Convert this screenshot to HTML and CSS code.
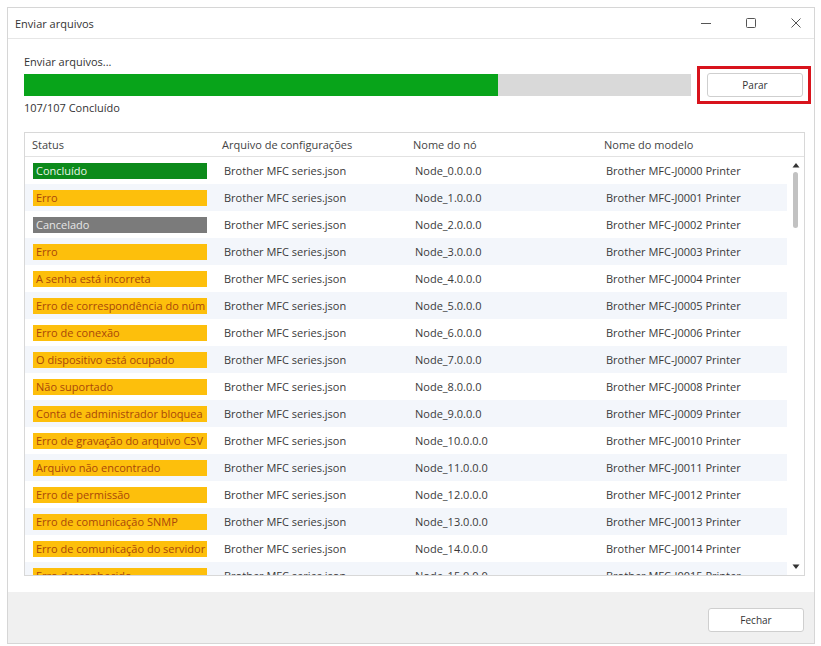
FILE: index.html
```html
<!doctype html>
<html>
<head>
<meta charset="UTF-8"/>
<link rel="stylesheet" href="styles.css">
<title>Enviar arquivos</title>
</head>
<body>
<div class="window">
  <div class="titlebar">
    <span class="title">Enviar arquivos</span>
    <div class="controls">
      <svg class="ctl" width="12" height="12" viewBox="0 0 12 12"><path d="M1 6.5h10" stroke="#555" stroke-width="1"/></svg>
      <svg class="ctl" width="12" height="12" viewBox="0 0 12 12"><rect x="1.5" y="1.5" width="9" height="9" rx="1" fill="none" stroke="#555" stroke-width="1"/></svg>
      <svg class="ctl" width="12" height="12" viewBox="0 0 12 12"><path d="M1.5 1.5l9 9M10.5 1.5l-9 9" stroke="#555" stroke-width="1"/></svg>
    </div>
  </div>

  <div class="content">
    <div class="label">Enviar arquivos...</div>
    <div class="progress-row">
      <div class="progress"><div class="progress-fill" style="width:71%"></div></div>
      <button class="btn btn-stop">Parar</button>
    </div>
    <div class="label count">107/107 Concluído</div>

    <div class="grid">
      <div class="grid-head">
        <div class="hcell first">Status</div>
        <div class="hcell">Arquivo de configurações</div>
        <div class="hcell">Nome do nó</div>
        <div class="hcell">Nome do modelo</div>
      </div>
      <div class="grid-body">
        <div class="rows">
          <div class="row"><div class="cell first"><span class="badge ok">Concluído</span></div><div class="cell">Brother MFC series.json</div><div class="cell">Node_0.0.0.0</div><div class="cell">Brother MFC-J0000 Printer</div></div>
          <div class="row alt"><div class="cell first"><span class="badge warn">Erro</span></div><div class="cell">Brother MFC series.json</div><div class="cell">Node_1.0.0.0</div><div class="cell">Brother MFC-J0001 Printer</div></div>
          <div class="row"><div class="cell first"><span class="badge off">Cancelado</span></div><div class="cell">Brother MFC series.json</div><div class="cell">Node_2.0.0.0</div><div class="cell">Brother MFC-J0002 Printer</div></div>
          <div class="row alt"><div class="cell first"><span class="badge warn">Erro</span></div><div class="cell">Brother MFC series.json</div><div class="cell">Node_3.0.0.0</div><div class="cell">Brother MFC-J0003 Printer</div></div>
          <div class="row"><div class="cell first"><span class="badge warn">A senha está incorreta</span></div><div class="cell">Brother MFC series.json</div><div class="cell">Node_4.0.0.0</div><div class="cell">Brother MFC-J0004 Printer</div></div>
          <div class="row alt"><div class="cell first"><span class="badge warn">Erro de correspondência do núm</span></div><div class="cell">Brother MFC series.json</div><div class="cell">Node_5.0.0.0</div><div class="cell">Brother MFC-J0005 Printer</div></div>
          <div class="row"><div class="cell first"><span class="badge warn">Erro de conexão</span></div><div class="cell">Brother MFC series.json</div><div class="cell">Node_6.0.0.0</div><div class="cell">Brother MFC-J0006 Printer</div></div>
          <div class="row alt"><div class="cell first"><span class="badge warn">O dispositivo está ocupado</span></div><div class="cell">Brother MFC series.json</div><div class="cell">Node_7.0.0.0</div><div class="cell">Brother MFC-J0007 Printer</div></div>
          <div class="row"><div class="cell first"><span class="badge warn">Não suportado</span></div><div class="cell">Brother MFC series.json</div><div class="cell">Node_8.0.0.0</div><div class="cell">Brother MFC-J0008 Printer</div></div>
          <div class="row alt"><div class="cell first"><span class="badge warn">Conta de administrador bloquea</span></div><div class="cell">Brother MFC series.json</div><div class="cell">Node_9.0.0.0</div><div class="cell">Brother MFC-J0009 Printer</div></div>
          <div class="row"><div class="cell first"><span class="badge warn">Erro de gravação do arquivo CSV</span></div><div class="cell">Brother MFC series.json</div><div class="cell">Node_10.0.0.0</div><div class="cell">Brother MFC-J0010 Printer</div></div>
          <div class="row alt"><div class="cell first"><span class="badge warn">Arquivo não encontrado</span></div><div class="cell">Brother MFC series.json</div><div class="cell">Node_11.0.0.0</div><div class="cell">Brother MFC-J0011 Printer</div></div>
          <div class="row"><div class="cell first"><span class="badge warn">Erro de permissão</span></div><div class="cell">Brother MFC series.json</div><div class="cell">Node_12.0.0.0</div><div class="cell">Brother MFC-J0012 Printer</div></div>
          <div class="row alt"><div class="cell first"><span class="badge warn">Erro de comunicação SNMP</span></div><div class="cell">Brother MFC series.json</div><div class="cell">Node_13.0.0.0</div><div class="cell">Brother MFC-J0013 Printer</div></div>
          <div class="row"><div class="cell first"><span class="badge warn">Erro de comunicação do servidor</span></div><div class="cell">Brother MFC series.json</div><div class="cell">Node_14.0.0.0</div><div class="cell">Brother MFC-J0014 Printer</div></div>
          <div class="row alt"><div class="cell first"><span class="badge warn">Erro desconhecido</span></div><div class="cell">Brother MFC series.json</div><div class="cell">Node_15.0.0.0</div><div class="cell">Brother MFC-J0015 Printer</div></div>
        </div>
        <div class="scrollbar">
          <svg width="8" height="6" viewBox="0 0 8 6"><path d="M4 1L7.5 5.5H0.5z" fill="#333"/></svg>
          <div class="thumb"></div>
          <div class="track"></div>
          <svg width="8" height="6" viewBox="0 0 8 6"><path d="M4 5L7.5 0.5H0.5z" fill="#333"/></svg>
        </div>
      </div>
    </div>
  </div>

  <div class="footer">
    <button class="btn">Fechar</button>
  </div>
</div>
</body>
</html>
```

FILE: styles.css
```css
body {
  margin: 0;
  background: #fff;
  font-family: "Open Sans", "Noto Sans", sans-serif;
  font-size: 11px;
  color: #333;
}
.window {
  margin: 7px 0 0 7px;
  width: 808px;
  height: 637px;
  box-sizing: border-box;
  border: 1px solid #d6d6d6;
  display: flex;
  flex-direction: column;
}
.titlebar {
  height: 30px;
  flex: none;
  border-bottom: 1px solid #e6e6e6;
  display: flex;
  align-items: center;
  justify-content: space-between;
  padding-left: 7px;
}
.title {
  color: #333;
}
.controls {
  display: flex;
  gap: 33px;
  padding-right: 12px;
}
.content {
  flex: 1;
  padding: 16px 9px 16px 16px;
  display: flex;
  flex-direction: column;
}
.label {
  line-height: 14px;
  height: 14px;
}
.progress-row {
  margin-top: 4px;
  height: 24px;
  display: flex;
  align-items: center;
  gap: 16px;
  padding-right: 2px;
}
.progress {
  flex: 1;
  height: 22px;
  background: #d9d9d9;
}
.progress-fill {
  height: 100%;
  background: #08a41a;
}
.btn {
  font-family: inherit;
  font-size: 10px;
  color: #333;
  width: 96px;
  height: 24px;
  background: #fff;
  border: 1px solid #cfcfcf;
  border-radius: 3px;
  padding: 0;
}
.btn-stop {
  position: relative;
}
.btn-stop::after {
  content: "";
  position: absolute;
  top: -8px;
  bottom: -8px;
  left: -11px;
  right: -9px;
  border: 3px solid #d8131c;
}
.count {
  margin-top: 4px;
}
.grid {
  margin-top: 17px;
  height: 444px;
  box-sizing: border-box;
  border: 1px solid #d8d8d8;
  display: flex;
  flex-direction: column;
}
.grid-head {
  height: 23px;
  flex: none;
  border-bottom: 1px solid #e2e2e2;
  display: grid;
  grid-template-columns: 189px 191px 191px 1fr;
  align-items: center;
  color: #444;
}
.hcell {
  padding-left: 8px;
}
.hcell.first {
  padding-left: 7px;
}
.grid-body {
  flex: 1;
  display: flex;
  overflow: hidden;
}
.rows {
  flex: 1;
  overflow: hidden;
}
.row {
  height: 27px;
  display: grid;
  grid-template-columns: 189px 191px 191px 1fr;
  align-items: center;
}
.row.alt {
  background: #f3f6fb;
}
.cell {
  padding-left: 10px;
  white-space: nowrap;
  color: #3a3a3a;
}
.cell.first {
  padding-left: 8px;
}
.badge {
  display: block;
  width: 174px;
  height: 16px;
  line-height: 16px;
  box-sizing: border-box;
  padding-left: 3px;
  overflow: hidden;
  white-space: nowrap;
  font-size: 11px;
}
.badge.ok {
  background: #0c8a1b;
  color: #eaf6ea;
}
.badge.warn {
  background: #fdbf0c;
  color: #a9470a;
}
.badge.off {
  background: #7b7b7b;
  color: #e6e6e6;
}
.scrollbar {
  width: 17px;
  flex: none;
  display: flex;
  flex-direction: column;
  align-items: center;
  padding: 5px 0 5px;
}
.thumb {
  margin-top: 4px;
  width: 5px;
  height: 56px;
  border-radius: 3px;
  background: #c2c2c2;
}
.track {
  flex: 1;
}
.footer {
  height: 51px;
  flex: none;
  background: #f0f0f0;
  box-sizing: border-box;
  padding: 16px 10px 0 0;
  display: flex;
  justify-content: flex-end;
  align-items: flex-start;
}
```
